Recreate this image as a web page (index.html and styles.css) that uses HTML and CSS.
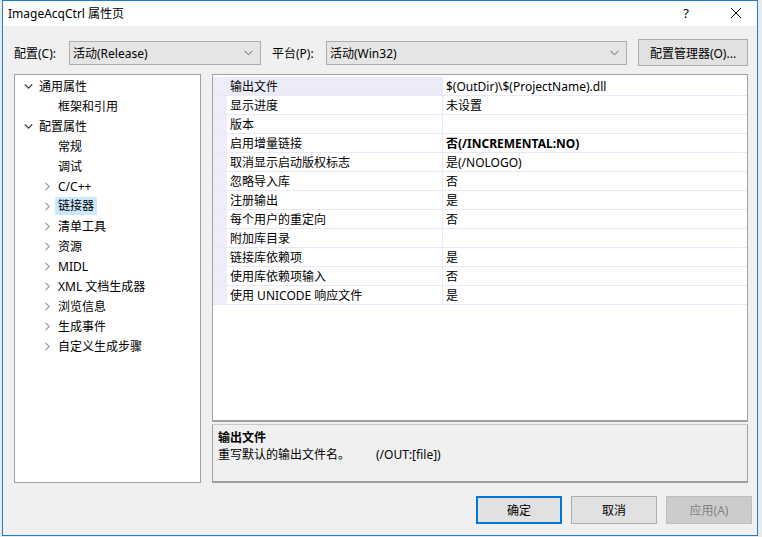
FILE: index.html
```html
<!DOCTYPE html>
<html>
<head>
<meta charset="utf-8">
<link rel="stylesheet" href="styles.css">
</head>
<body>
<div class="window">
  <div class="titlebar">
    <div class="title">ImageAcqCtrl 属性页</div>
    <div class="tb-help">?</div>
    <div class="tb-close">
      <svg width="12" height="12" viewBox="0 0 12 12"><path d="M1 1 L11 11 M11 1 L1 11" stroke="#000" stroke-width="1" fill="none"/></svg>
    </div>
  </div>
  <div class="content">
    <div class="toolbar">
      <span class="lbl">配置(C):</span>
      <div class="combo combo1"><span>活动(Release)</span><svg class="dd" width="9" height="6" viewBox="0 0 9 6"><path d="M0.5 0.8 L4.5 4.8 L8.5 0.8" stroke="#606060" fill="none"/></svg></div>
      <span class="lbl lbl2">平台(P):</span>
      <div class="combo combo2"><span>活动(Win32)</span><svg class="dd" width="9" height="6" viewBox="0 0 9 6"><path d="M0.5 0.8 L4.5 4.8 L8.5 0.8" stroke="#606060" fill="none"/></svg></div>
      <div class="btn mgr">配置管理器(O)...</div>
    </div>
    <div class="panels">
      <div class="tree">
        <div class="ti l0"><svg class="chev" width="9" height="9" viewBox="0 0 9 9"><path d="M0.8 2.5 L4.5 6.2 L8.2 2.5" stroke="#404040" stroke-width="1.3" fill="none"/></svg><span>通用属性</span></div>
        <div class="ti l1"><span class="nochev"></span><span>框架和引用</span></div>
        <div class="ti l0"><svg class="chev" width="9" height="9" viewBox="0 0 9 9"><path d="M0.8 2.5 L4.5 6.2 L8.2 2.5" stroke="#404040" stroke-width="1.3" fill="none"/></svg><span>配置属性</span></div>
        <div class="ti l1"><span class="nochev"></span><span>常规</span></div>
        <div class="ti l1"><span class="nochev"></span><span>调试</span></div>
        <div class="ti l1"><svg class="chev" width="9" height="9" viewBox="0 0 9 9"><path d="M2.5 0.8 L6.2 4.5 L2.5 8.2" stroke="#a6a6a6" stroke-width="1.3" fill="none"/></svg><span>C/C++</span></div>
        <div class="ti l1"><svg class="chev" width="9" height="9" viewBox="0 0 9 9"><path d="M2.5 0.8 L6.2 4.5 L2.5 8.2" stroke="#a6a6a6" stroke-width="1.3" fill="none"/></svg><span class="sel">链接器</span></div>
        <div class="ti l1"><svg class="chev" width="9" height="9" viewBox="0 0 9 9"><path d="M2.5 0.8 L6.2 4.5 L2.5 8.2" stroke="#a6a6a6" stroke-width="1.3" fill="none"/></svg><span>清单工具</span></div>
        <div class="ti l1"><svg class="chev" width="9" height="9" viewBox="0 0 9 9"><path d="M2.5 0.8 L6.2 4.5 L2.5 8.2" stroke="#a6a6a6" stroke-width="1.3" fill="none"/></svg><span>资源</span></div>
        <div class="ti l1"><svg class="chev" width="9" height="9" viewBox="0 0 9 9"><path d="M2.5 0.8 L6.2 4.5 L2.5 8.2" stroke="#a6a6a6" stroke-width="1.3" fill="none"/></svg><span>MIDL</span></div>
        <div class="ti l1"><svg class="chev" width="9" height="9" viewBox="0 0 9 9"><path d="M2.5 0.8 L6.2 4.5 L2.5 8.2" stroke="#a6a6a6" stroke-width="1.3" fill="none"/></svg><span>XML 文档生成器</span></div>
        <div class="ti l1"><svg class="chev" width="9" height="9" viewBox="0 0 9 9"><path d="M2.5 0.8 L6.2 4.5 L2.5 8.2" stroke="#a6a6a6" stroke-width="1.3" fill="none"/></svg><span>浏览信息</span></div>
        <div class="ti l1"><svg class="chev" width="9" height="9" viewBox="0 0 9 9"><path d="M2.5 0.8 L6.2 4.5 L2.5 8.2" stroke="#a6a6a6" stroke-width="1.3" fill="none"/></svg><span>生成事件</span></div>
        <div class="ti l1"><svg class="chev" width="9" height="9" viewBox="0 0 9 9"><path d="M2.5 0.8 L6.2 4.5 L2.5 8.2" stroke="#a6a6a6" stroke-width="1.3" fill="none"/></svg><span>自定义生成步骤</span></div>
      </div>
      <div class="gridpane">
        <div class="grid">
          <div class="row selrow"><div class="gut"></div><div class="name">输出文件</div><div class="val">$(OutDir)\$(ProjectName).dll</div></div>
          <div class="row"><div class="gut"></div><div class="name">显示进度</div><div class="val">未设置</div></div>
          <div class="row"><div class="gut"></div><div class="name">版本</div><div class="val"></div></div>
          <div class="row"><div class="gut"></div><div class="name">启用增量链接</div><div class="val bold">否(/INCREMENTAL:NO)</div></div>
          <div class="row"><div class="gut"></div><div class="name">取消显示启动版权标志</div><div class="val">是(/NOLOGO)</div></div>
          <div class="row"><div class="gut"></div><div class="name">忽略导入库</div><div class="val">否</div></div>
          <div class="row"><div class="gut"></div><div class="name">注册输出</div><div class="val">是</div></div>
          <div class="row"><div class="gut"></div><div class="name">每个用户的重定向</div><div class="val">否</div></div>
          <div class="row"><div class="gut"></div><div class="name">附加库目录</div><div class="val"></div></div>
          <div class="row"><div class="gut"></div><div class="name">链接库依赖项</div><div class="val">是</div></div>
          <div class="row"><div class="gut"></div><div class="name">使用库依赖项输入</div><div class="val">否</div></div>
          <div class="row"><div class="gut"></div><div class="name">使用 UNICODE 响应文件</div><div class="val">是</div></div>
        </div>
        <div class="desc">
          <div class="desc-title">输出文件</div>
          <div class="desc-text"><span>重写默认的输出文件名。</span><span class="sw">(/OUT:[file])</span></div>
        </div>
      </div>
    </div>
    <div class="buttons">
      <div class="btn ok">确定</div>
      <div class="btn">取消</div>
      <div class="btn disabled">应用(A)</div>
    </div>
  </div>
</div>
</body>
</html>
```
FILE: styles.css
```css
html, body {
  margin: 0;
  padding: 0;
}
body {
  width: 762px;
  height: 537px;
  background: #e9e9e9;
  font-family: "Noto Sans", "Noto Sans CJK SC", sans-serif;
  font-size: 12px;
  color: #000;
  overflow: hidden;
}
.window {
  margin-left: 2px;
  width: 754px;
  height: 534px;
  border: 1px solid #1a7fd4;
  border-top: 1px solid #1a7fd4;
  background: #f0f0f0;
  display: flex;
  flex-direction: column;
}
.titlebar {
  height: 25px;
  background: #fff;
  display: flex;
  align-items: center;
  flex: none;
}
.title {
  margin-left: 5px;
  flex: 1;
  margin-top: -2px;
}
.tb-help {
  width: 20px;
  text-align: center;
  font-size: 13px;
  margin-right: 34px;
  margin-top: -2px;
}
.tb-close {
  width: 12px;
  height: 12px;
  margin-right: 15px;
  margin-top: -1px;
  display: flex;
}
.content {
  flex: 1;
  display: flex;
  flex-direction: column;
  padding: 0 0 0 11px;
}
.toolbar {
  display: flex;
  align-items: center;
  margin-top: 13px;
  height: 27px;
}
.lbl {
  width: 55px;
}
.lbl2 {
  width: 54px;
  margin-left: 11px;
}
.combo {
  height: 22px;
  border: 1px solid #adadad;
  background: #e5e5e5;
  display: flex;
  align-items: center;
  padding-left: 3px;
  box-sizing: content-box;
}
.combo span { flex: 1; }
.combo .dd { margin-right: 7px; }
.combo1 { width: 187px; }
.combo2 { width: 296px; }
.btn {
  height: 26px;
  border: 1px solid #adadad;
  background: #e1e1e1;
  display: flex;
  align-items: center;
  justify-content: center;
  width: 84px;
}
.mgr {
  width: 108px;
  height: 25px;
  margin-left: 11px;
}
.panels {
  display: flex;
  margin-top: 8px;
  height: 409px;
}
.tree {
  width: 185px;
  border: 1px solid #a0a0a0;
  background: #fff;
  padding-top: 1px;
  box-sizing: content-box;
  height: 406px;
}
.ti {
  height: 20px;
  display: flex;
  align-items: center;
}
.ti.l0 { padding-left: 9px; }
.ti.l1 { padding-left: 28px; }
.chev, .nochev {
  width: 9px;
  height: 9px;
  margin-right: 6px;
  flex: none;
}
.nochev { display: inline-block; }
.sel {
  background: #cce8ff;
  padding: 1px 3px;
  margin-left: -3px;
  line-height: 16px;
}
.gridpane {
  margin-left: 11px;
  width: 536px;
  display: flex;
  flex-direction: column;
}
.grid {
  height: 343px;
  border: 1px solid #a0a0a0;
  border-bottom: 2px solid #a0a0a0;
  background: #fff;
  padding-top: 2px;
}
.row {
  display: flex;
  height: 18px;
  border-bottom: 1px solid #e8e8f6;
}
.gut {
  width: 14px;
  background: #eeeef9;
  flex: none;
}
.name {
  width: 216px;
  padding-left: 3px;
  border-right: 1px solid #e8e8f6;
  display: flex;
  align-items: center;
  flex: none;
  box-sizing: border-box;
}
.selrow .name { background: #ececf8; }
.val {
  padding-left: 3px;
  display: flex;
  align-items: center;
  flex: 1;
}
.bold { font-weight: bold; }
.desc {
  flex: 1;
  margin-top: 2px;
  border: 1px solid #a0a0a0;
  border-top: 1px solid #c8c8c8;
  border-bottom: 2px solid #a0a0a0;
  padding: 3px 0 0 5px;
}
.desc-title {
  font-weight: bold;
  height: 17px;
}
.sw { margin-left: 26px; }
.buttons {
  display: flex;
  justify-content: flex-end;
  gap: 9px;
  margin-top: 13px;
  padding-right: 5px;
}
.btn.ok {
  border: 2px solid #0078d7;
  width: 82px;
  height: 24px;
}
.btn.disabled {
  background: #cccccc;
  border-color: #bfbfbf;
  color: #838383;
}
```
